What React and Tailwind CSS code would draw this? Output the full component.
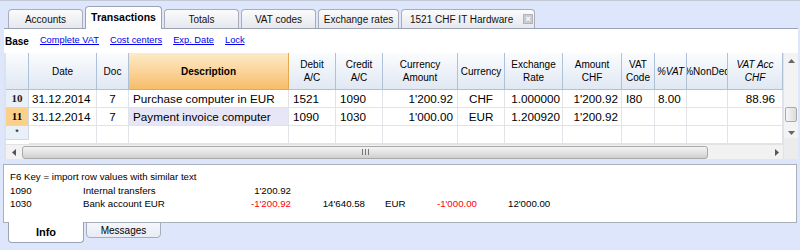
const COLS = "grid grid-cols-[23px_68px_32px_160px_47px_47px_75px_47px_58px_59px_33px_32px_41px_55px]";

function Tab({ label, active, className = "", children }) {
  if (active) {
    return (
      <div className={`h-[23px] flex items-center justify-center bg-white border border-b-0 border-[#9aa3b3] rounded-t-[4px] text-[10.5px] font-bold text-black relative top-[1px] ${className}`}>
        {label}
      </div>
    );
  }
  return (
    <div className={`h-[19px] flex items-center justify-center bg-gradient-to-b from-[#fbfbfc] to-[#e6e8ee] border border-b-0 border-[#a7adb9] rounded-t-[4px] text-[10px] text-[#111] ${className}`}>
      {label}
      {children}
    </div>
  );
}

function HeadCell({ children, className = "", orange }) {
  return (
    <div
      className={`h-[37px] flex items-center justify-center text-center leading-[13px] text-[10px] overflow-hidden whitespace-nowrap border-r border-b ${
        orange
          ? "bg-gradient-to-b from-[#fdebc7] to-[#f7bd68] border-[#e7a94f]"
          : "bg-gradient-to-b from-[#fbfcfe] to-[#e0e8f3] border-[#adc1d8]"
      } ${className}`}
    >
      {children}
    </div>
  );
}

function Cell({ children, className = "" }) {
  return (
    <div className={`h-[18px] flex items-center text-[11.7px] whitespace-nowrap overflow-hidden border-r border-b border-[#e0e3e8] ${className}`}>
      {children}
    </div>
  );
}

function RowHead({ children, orange }) {
  return (
    <div
      className={`h-[18px] flex items-center justify-center text-[11px] font-bold font-['Liberation_Serif',serif] border-r border-b border-[#d0d8e4] ${
        orange ? "bg-[#fbd08a] text-black" : "bg-[#eaf0f8] text-[#222]"
      }`}
    >
      {children}
    </div>
  );
}

export default function App() {
  return (
    <div className="w-[800px] h-[250px] bg-[#dee6fc] font-['Liberation_Sans',Arial,sans-serif] text-black overflow-hidden flex flex-col">
      {/* top tabs */}
      <div className="h-[28px] border-t border-[#c3c9d6] flex items-end pl-[8px] gap-[2px] shrink-0">
        <Tab label="Accounts" className="w-[75px]" />
        <Tab label="Transactions" active className="w-[77px]" />
        <Tab label="Totals" className="w-[75px]" />
        <Tab label="VAT codes" className="w-[75px]" />
        <Tab label="Exchange rates" className="w-[81px]" />
        <Tab label="" className="w-[134px] justify-start pl-[8px] gap-[10px]">
          <span>1521 CHF IT Hardware</span>
          <span className="w-[10px] h-[10px] bg-[#c9cbd0] border border-[#b0b3ba] flex items-center justify-center text-white text-[9px] leading-none font-bold">×</span>
        </Tab>
      </div>

      {/* main white panel */}
      <div className="ml-[4px] mr-[2px] bg-white border-t border-[#9aa3b3] shrink-0">
        <div className="h-[24px] flex items-center pl-[1px] gap-[11px] text-[10px]">
          <span className="font-bold text-[10px]">Base</span>
          <span className="text-[#0000ee] underline text-[9.3px]">Complete VAT</span>
          <span className="text-[#0000ee] underline text-[9.3px]">Cost centers</span>
          <span className="text-[#0000ee] underline text-[9.3px]">Exp. Date</span>
          <span className="text-[#0000ee] underline text-[9.3px]">Lock</span>
        </div>

        <div className="flex bg-[#dbe3f2] pl-[2px]">
          <div className="flex flex-col">
            <div className={`${COLS} bg-white`}>
              <HeadCell className="bg-gradient-to-b from-[#e8eef8] to-[#d7e1f0]"></HeadCell>
              <HeadCell>Date</HeadCell>
              <HeadCell>Doc</HeadCell>
              <HeadCell orange className="font-bold">Description</HeadCell>
              <HeadCell>Debit<br />A/C</HeadCell>
              <HeadCell>Credit<br />A/C</HeadCell>
              <HeadCell>Currency<br />Amount</HeadCell>
              <HeadCell>Currency</HeadCell>
              <HeadCell>Exchange<br />Rate</HeadCell>
              <HeadCell>Amount<br />CHF</HeadCell>
              <HeadCell>VAT<br />Code</HeadCell>
              <HeadCell className="italic">%VAT</HeadCell>
              <HeadCell>%NonDed</HeadCell>
              <HeadCell className="italic">VAT Acc<br />CHF</HeadCell>

              <RowHead>10</RowHead>
              <Cell className="pl-[3px]">31.12.2014</Cell>
              <Cell className="justify-center">7</Cell>
              <Cell className="pl-[4px]">Purchase computer in EUR</Cell>
              <Cell className="pl-[4px]">1521</Cell>
              <Cell className="pl-[4px]">1090</Cell>
              <Cell className="justify-end pr-[4px]">1'200.92</Cell>
              <Cell className="justify-center">CHF</Cell>
              <Cell className="justify-end pr-[2px]">1.000000</Cell>
              <Cell className="justify-end pr-[3px]">1'200.92</Cell>
              <Cell className="pl-[4px]">I80</Cell>
              <Cell className="pl-[3px]">8.00</Cell>
              <Cell></Cell>
              <Cell className="justify-end pr-[7px]">88.96</Cell>

              <RowHead orange>11</RowHead>
              <Cell className="pl-[3px]">31.12.2014</Cell>
              <Cell className="justify-center">7</Cell>
              <Cell className="pl-[4px] bg-[#e6e6f6]">Payment invoice computer</Cell>
              <Cell className="pl-[4px]">1090</Cell>
              <Cell className="pl-[4px]">1030</Cell>
              <Cell className="justify-end pr-[4px]">1'000.00</Cell>
              <Cell className="justify-center">EUR</Cell>
              <Cell className="justify-end pr-[2px]">1.200920</Cell>
              <Cell className="justify-end pr-[3px]">1'200.92</Cell>
              <Cell></Cell>
              <Cell></Cell>
              <Cell></Cell>
              <Cell></Cell>

              <div className="h-[14px] flex items-center justify-center text-[9px] bg-[#eaf0f8] border-r border-b border-[#d0d8e4]">*</div>
              <Cell className="h-[14px]"></Cell>
              <Cell className="h-[14px]"></Cell>
              <Cell className="h-[14px]"></Cell>
              <Cell className="h-[14px]"></Cell>
              <Cell className="h-[14px]"></Cell>
              <Cell className="h-[14px]"></Cell>
              <Cell className="h-[14px]"></Cell>
              <Cell className="h-[14px]"></Cell>
              <Cell className="h-[14px]"></Cell>
              <Cell className="h-[14px]"></Cell>
              <Cell className="h-[14px]"></Cell>
              <Cell className="h-[14px]"></Cell>
              <Cell className="h-[14px]"></Cell>
            </div>
            {/* horizontal scrollbar */}
            <div className="h-[15px] bg-[#f2f2f2] flex items-center border-t border-[#e2e2e2]">
              <div className="w-[16px] flex items-center justify-center">
                <svg width="4" height="7" viewBox="0 0 4 7"><path d="M4 0 L0 3.5 L4 7 Z" fill="#555" /></svg>
              </div>
              <div className="w-[686px] h-[13px] rounded-[3px] border border-[#a9a9a9] bg-gradient-to-b from-[#f4f4f4] via-[#e3e3e3] to-[#cfcfcf] flex items-center justify-center">
                <svg width="7" height="6" viewBox="0 0 7 6"><path d="M0.5 0V6M3.5 0V6M6.5 0V6" stroke="#777" strokeWidth="1" /></svg>
              </div>
              <div className="flex-1"></div>
              <div className="w-[12px] flex items-center justify-center">
                <svg width="4" height="7" viewBox="0 0 4 7"><path d="M0 0 L4 3.5 L0 7 Z" fill="#555" /></svg>
              </div>
            </div>
          </div>
          {/* vertical scrollbar */}
          <div className="w-[15px] flex flex-col bg-[#f3f3f3] border-l border-[#e2e2e2]">
            <div className="h-[16px] flex items-center justify-center">
              <svg width="7" height="4" viewBox="0 0 7 4"><path d="M0 4 L3.5 0 L7 4 Z" fill="#666" /></svg>
            </div>
            <div className="h-[38px]"></div>
            <div className="h-[15px] mx-[1px] rounded-[2px] border border-[#a9a9a9] bg-gradient-to-r from-[#f6f6f6] to-[#dcdcdc]"></div>
            <div className="h-[6px]"></div>
            <div className="h-[10px] flex items-center justify-center">
              <svg width="7" height="4" viewBox="0 0 7 4"><path d="M0 0 L3.5 4 L7 0 Z" fill="#666" /></svg>
            </div>
            <div className="flex-1 bg-[#ececec]"></div>
          </div>
        </div>
      </div>

      {/* info panel */}
      <div className="mt-[5px] ml-[3px] mr-[3px] h-[59px] bg-white border border-[#aab0bb] pt-[5px] pl-[6px] text-[9.7px] leading-[13.5px] shrink-0">
        <div>F6 Key = import row values with similar text</div>
        <div className="flex">
          <span className="w-[73px]">1090</span>
          <span className="w-[133px]">Internal transfers</span>
          <span className="w-[75px] text-right">1'200.92</span>
        </div>
        <div className="flex">
          <span className="w-[73px]">1030</span>
          <span className="w-[133px]">Bank account EUR</span>
          <span className="w-[75px] text-right text-[#ff0000]">-1'200.92</span>
          <span className="w-[74px] text-right">14'640.58</span>
          <span className="w-[20px]"></span>
          <span className="w-[30px]">EUR</span>
          <span className="w-[62px] text-right text-[#ff0000]">-1'000.00</span>
          <span className="w-[31px]"></span>
          <span>12'000.00</span>
        </div>
      </div>

      {/* bottom tabs */}
      <div className="flex pl-[8px] gap-[2px] -mt-[1px]">
        <div className="w-[76px] h-[21px] bg-white border border-t-0 border-[#9aa3b3] rounded-b-[4px] flex items-center justify-center text-[11px] font-bold">Info</div>
        <div className="w-[75px] h-[16px] bg-gradient-to-b from-[#f4f6fb] to-[#e9ecf4] border border-[#a7adb9] rounded-b-[4px] flex items-center justify-center text-[10px]">Messages</div>
      </div>
    </div>
  );
}
